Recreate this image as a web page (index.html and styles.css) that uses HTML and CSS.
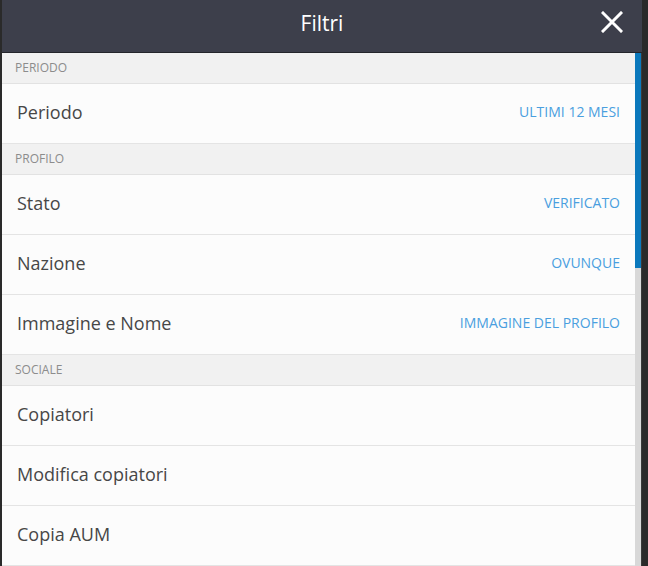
FILE: index.html
```html
<!DOCTYPE html>
<html lang="it">
<head>
    <meta charset="UTF-8">
    <meta name="viewport" content="width=device-width, initial-scale=1.0">
    <title>Filtri</title>
    <link rel="stylesheet" href="styles.css">
</head>
<body>

<div class="modal">
    <header class="modal-header">
        <h1>Filtri</h1>
        <button class="close-btn" aria-label="Chiudi">
            <svg width="22" height="22" viewBox="0 0 22 22">
                <path d="M2 2 L20 20 M20 2 L2 20" stroke="#fff" stroke-width="3" stroke-linecap="square"/>
            </svg>
        </button>
    </header>

    <div class="modal-body">
        <div class="filter-list">
            <!-- Periodo -->
            <div class="group-title">Periodo</div>
            <div class="filter-row">
                <span class="label">Periodo</span>
                <span class="value">Ultimi 12 mesi</span>
            </div>

            <!-- Profilo -->
            <div class="group-title">Profilo</div>
            <div class="filter-row">
                <span class="label">Stato</span>
                <span class="value">Verificato</span>
            </div>
            <div class="filter-row">
                <span class="label">Nazione</span>
                <span class="value">Ovunque</span>
            </div>
            <div class="filter-row">
                <span class="label">Immagine e Nome</span>
                <span class="value">Immagine del profilo</span>
            </div>

            <!-- Sociale -->
            <div class="group-title">Sociale</div>
            <div class="filter-row">
                <span class="label">Copiatori</span>
            </div>
            <div class="filter-row">
                <span class="label">Modifica copiatori</span>
            </div>
            <div class="filter-row">
                <span class="label">Copia AUM</span>
            </div>
        </div>

        <div class="scrollbar">
            <div class="scroll-thumb"></div>
        </div>
    </div>
</div>

</body>
</html>
```

FILE: styles.css
```css
* {
    margin: 0;
    padding: 0;
    box-sizing: border-box;
}

body {
    font-family: 'Open Sans', 'Liberation Sans', sans-serif;
    background-color: #2a2a2a;
    height: 566px;
    overflow: hidden;
}

.modal {
    margin-left: 2px;
    width: 640px;
    height: 566px;
    display: flex;
    flex-direction: column;
    background-color: #fcfcfc;
}

.modal-header {
    height: 53px;
    flex-shrink: 0;
    background-color: #3d3f4b;
    border-bottom: 1px solid #24252b;
    display: flex;
    align-items: center;
    justify-content: center;
    position: relative;
}

.modal-header h1 {
    color: #fff;
    font-size: 21px;
    font-weight: 400;
    margin-top: -7px;
}

.close-btn {
    position: absolute;
    right: 19px;
    top: 11px;
    background: none;
    border: none;
    width: 22px;
    height: 22px;
    cursor: pointer;
}

.close-btn svg {
    display: block;
}

.modal-body {
    flex: 1;
    display: flex;
    overflow: hidden;
}

.filter-list {
    flex: 1;
}

.group-title {
    height: 31px;
    padding-left: 13px;
    padding-bottom: 2px;
    display: flex;
    align-items: center;
    background-color: #f1f1f1;
    border-bottom: 1px solid #e2e2e2;
    color: #8c8c8c;
    font-size: 12px;
    text-transform: uppercase;
}

.filter-row {
    height: 60px;
    padding: 0 15px 4px;
    display: flex;
    align-items: center;
    justify-content: space-between;
    background-color: #fcfcfc;
    border-bottom: 1px solid #e4e4e4;
}

.label {
    color: #474747;
    font-size: 18px;
}

.value {
    color: #4a9fdf;
    font-size: 14px;
    text-transform: uppercase;
}

.scrollbar {
    width: 7px;
    background-color: #d8d8d8;
    border-right: 1px solid #3a3a3a;
}

.scroll-thumb {
    width: 6px;
    height: 215px;
    background-color: #0a78bc;
}
```
